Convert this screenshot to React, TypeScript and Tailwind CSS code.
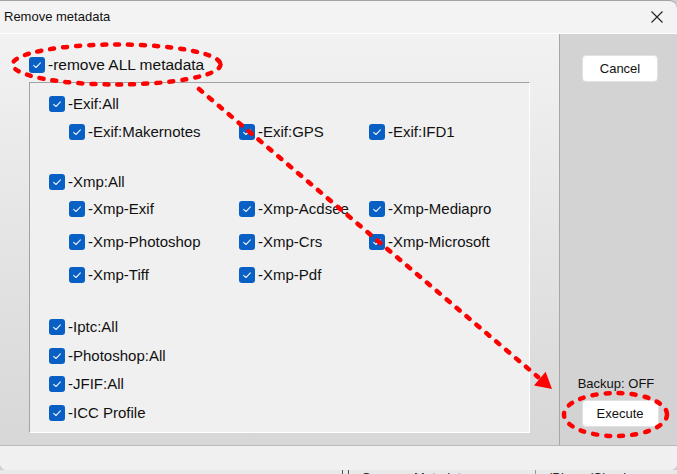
import React from "react";

function Box({ label, main }: { label: string; main?: boolean }) {
  return (
    <div className="flex h-4 items-center gap-[3px] whitespace-nowrap">
      <span className="flex h-4 w-4 shrink-0 items-center justify-center rounded-[3px] bg-[#0860c4]">
        <svg width="16" height="16" viewBox="0 0 16 16" fill="none">
          <path d="M4.6 8.3 L7 10.5 L11.4 5.9" stroke="#e8f0fb" strokeWidth="1.1" strokeLinecap="round" strokeLinejoin="round" />
        </svg>
      </span>
      <span className={main ? "text-[15.5px] leading-4 text-[#111]" : "text-[15px] leading-4 text-[#111]"}>{label}</span>
    </div>
  );
}

export default function App() {
  return (
    <div className="relative h-[474px] w-[677px] overflow-hidden bg-[#cfcfcf] font-['Liberation_Sans',Arial,sans-serif]">
      <div className="flex h-[470px] flex-col overflow-hidden rounded-b-[7px] rounded-tr-[8px] border-t border-[#a3a3a3] bg-[#f3f3f3]">
        {/* title bar */}
        <div className="flex h-[32px] shrink-0 items-center justify-between pl-[4px] pr-[13px]">
          <span className="text-[13px] text-[#111]">Remove metadata</span>
          <svg width="14" height="14" viewBox="0 0 14 14">
            <path d="M1.5 1.5 L12.5 12.5 M12.5 1.5 L1.5 12.5" stroke="#222" strokeWidth="1.1" />
          </svg>
        </div>

        <div className="flex h-[412px] shrink-0 border-t border-white">
          {/* left panel */}
          <div className="w-[559px] bg-gradient-to-b from-[#f2f2f2] to-[#d7d7d7] pl-[29px] pt-[23px]">
            <Box label="-remove ALL metadata" main />
            <div className="mt-[9px] h-[351px] w-[501px] border border-b-white border-l-[#a3a3a3] border-r-white border-t-[#a3a3a3] bg-[#f0f0f0] pl-[19px] pt-[13px]">
              <Box label="-Exif:All" />
              <div className="mt-3 grid grid-cols-[170px_130px_auto] pl-[20px]">
                <Box label="-Exif:Makernotes" />
                <Box label="-Exif:GPS" />
                <Box label="-Exif:IFD1" />
              </div>

              <div className="mt-[34px]">
                <Box label="-Xmp:All" />
              </div>
              <div className="mt-[11px] grid grid-cols-[170px_130px_auto] gap-y-[17px] pl-[20px]">
                <Box label="-Xmp-Exif" />
                <Box label="-Xmp-Acdsee" />
                <Box label="-Xmp-Mediapro" />
                <Box label="-Xmp-Photoshop" />
                <Box label="-Xmp-Crs" />
                <Box label="-Xmp-Microsoft" />
                <Box label="-Xmp-Tiff" />
                <Box label="-Xmp-Pdf" />
              </div>

              <div className="mt-[36px] flex flex-col gap-[12.7px]">
                <Box label="-Iptc:All" />
                <Box label="-Photoshop:All" />
                <Box label="-JFIF:All" />
                <Box label="-ICC Profile" />
              </div>
            </div>
          </div>

          {/* right panel */}
          <div className="flex flex-1 flex-col items-center border-l border-[#a6a6a6] bg-[#d3d3d3] pb-[18px] pl-[3px] pt-[21px]">
            <button className="h-[27px] w-[76px] rounded-[4px] border border-[#e2e2e2] bg-white text-[13px] text-[#111]">
              Cancel
            </button>
            <div className="mr-[8px] mt-auto text-[13px] leading-4 text-[#111]">Backup: OFF</div>
            <button className="mt-[8px] h-[27px] w-[77px] rounded-[4px] border border-[#e2e2e2] bg-white text-[13px] text-[#111]">
              Execute
            </button>
          </div>
        </div>

        <div className="flex-1 border-t border-[#b9b9b9] bg-[#f0f0f0]" />
      </div>

      {/* window underneath */}
      <div className="flex h-[4px] overflow-hidden bg-[#e9e9e9] text-[13px] leading-[16px] text-[#222]">
        <div className="w-[342px]" />
        <div className="w-px bg-[#555]" />
        <div className="w-[5px]" />
        <div className="w-px bg-[#555]" />
        <div className="w-[186px] pl-[13px]">Source&nbsp;&nbsp;&nbsp;Metadata</div>
        <div className="w-px bg-[#999]" />
        <div className="pl-[12px]">(Binary/Check</div>
      </div>

      {/* red annotations */}
      <svg className="pointer-events-none absolute inset-0" width="677" height="474" viewBox="0 0 677 474">
        <g fill="none" stroke="#ff0000" strokeWidth="4.5" strokeLinecap="round" strokeDasharray="4 9">
          <ellipse cx="116.5" cy="64.5" rx="104" ry="20" />
          <ellipse cx="615.5" cy="414.5" rx="51.5" ry="21.5" />
          <line x1="199" y1="89" x2="538" y2="377" />
        </g>
        <polygon points="552,389 534,385.5 545.6,371.7" fill="#ff0000" />
      </svg>
    </div>
  );
}
